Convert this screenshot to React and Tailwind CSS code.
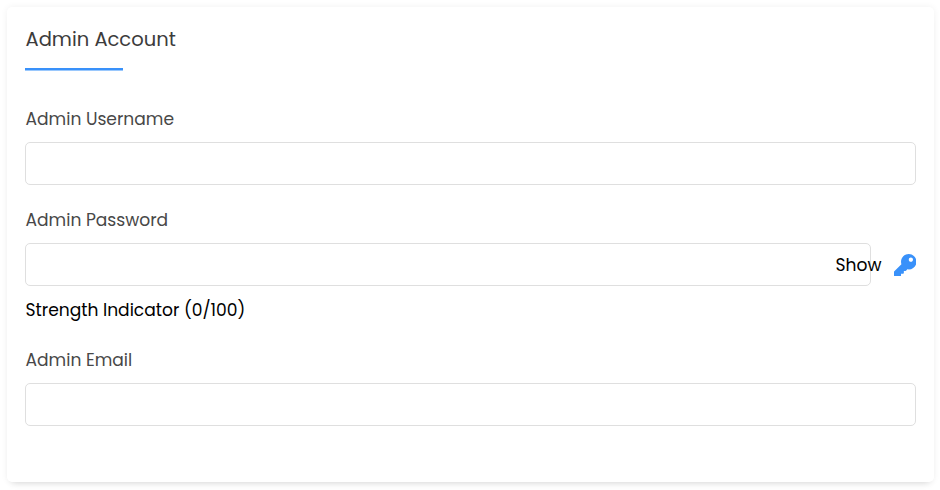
import { FaKey } from "react-icons/fa";

const inputClass =
  "block h-[43px] w-full rounded-[5px] border border-[#dfdfdf] bg-white px-3 text-[17px] text-black outline-none";

function Label({ htmlFor, children }) {
  return (
    <label htmlFor={htmlFor} className="mb-[11px] block h-6 pl-[0.5px] text-[17.1px] leading-6 whitespace-nowrap text-[#484848]">
      {children}
    </label>
  );
}

export default function App() {
  return (
    <main className="h-[490px] w-[940px] overflow-hidden bg-white pt-[7px] pr-[6px] pl-[7px] font-['Poppins','Open_Sans',sans-serif]">
      <section className="h-[475px] rounded-[5px] bg-white px-[18px] pt-[19px] shadow-[0_0_7px_rgba(0,0,0,0.06),0_6px_7px_-5px_rgba(0,0,0,0.13)]">
        <h1 className="h-[28px] pl-[0.5px] text-[19.5px] leading-[28px] font-normal whitespace-nowrap text-[#3c3c3c]">
          Admin Account
        </h1>
        <div className="mt-[14px] h-[2px] w-[98px] bg-[#3991fa]" />
        <div className="h-px w-[98px] bg-[#9ac8fd]" />

        <form className="mt-[36px]">
          <Label htmlFor="username">Admin Username</Label>
          <input id="username" type="text" className={`${inputClass} mb-[23px]`} />

          <Label htmlFor="password">Admin Password</Label>
          <div className="flex h-[43px] items-center">
            <input id="password" type="password" className={`${inputClass} max-w-[846px] shrink-0`} />
            <button type="button" className="relative z-10 -ml-[36px] h-6 w-[47px] pl-[0.5px] text-left text-[17.1px] leading-6 text-black">
              Show
            </button>
            <button type="button" aria-label="Generate password" className="mt-px ml-[11.5px] shrink-0 text-[#3991fa]">
              <FaKey className="block size-[22.5px]" />
            </button>
          </div>
          <p className="mt-[12px] mb-[26px] h-6 pl-[0.5px] text-[17.1px] leading-6 whitespace-nowrap text-black">
            Strength Indicator (0/100)
          </p>

          <Label htmlFor="email">Admin Email</Label>
          <input id="email" type="email" className={inputClass} />
        </form>
      </section>
    </main>
  );
}
